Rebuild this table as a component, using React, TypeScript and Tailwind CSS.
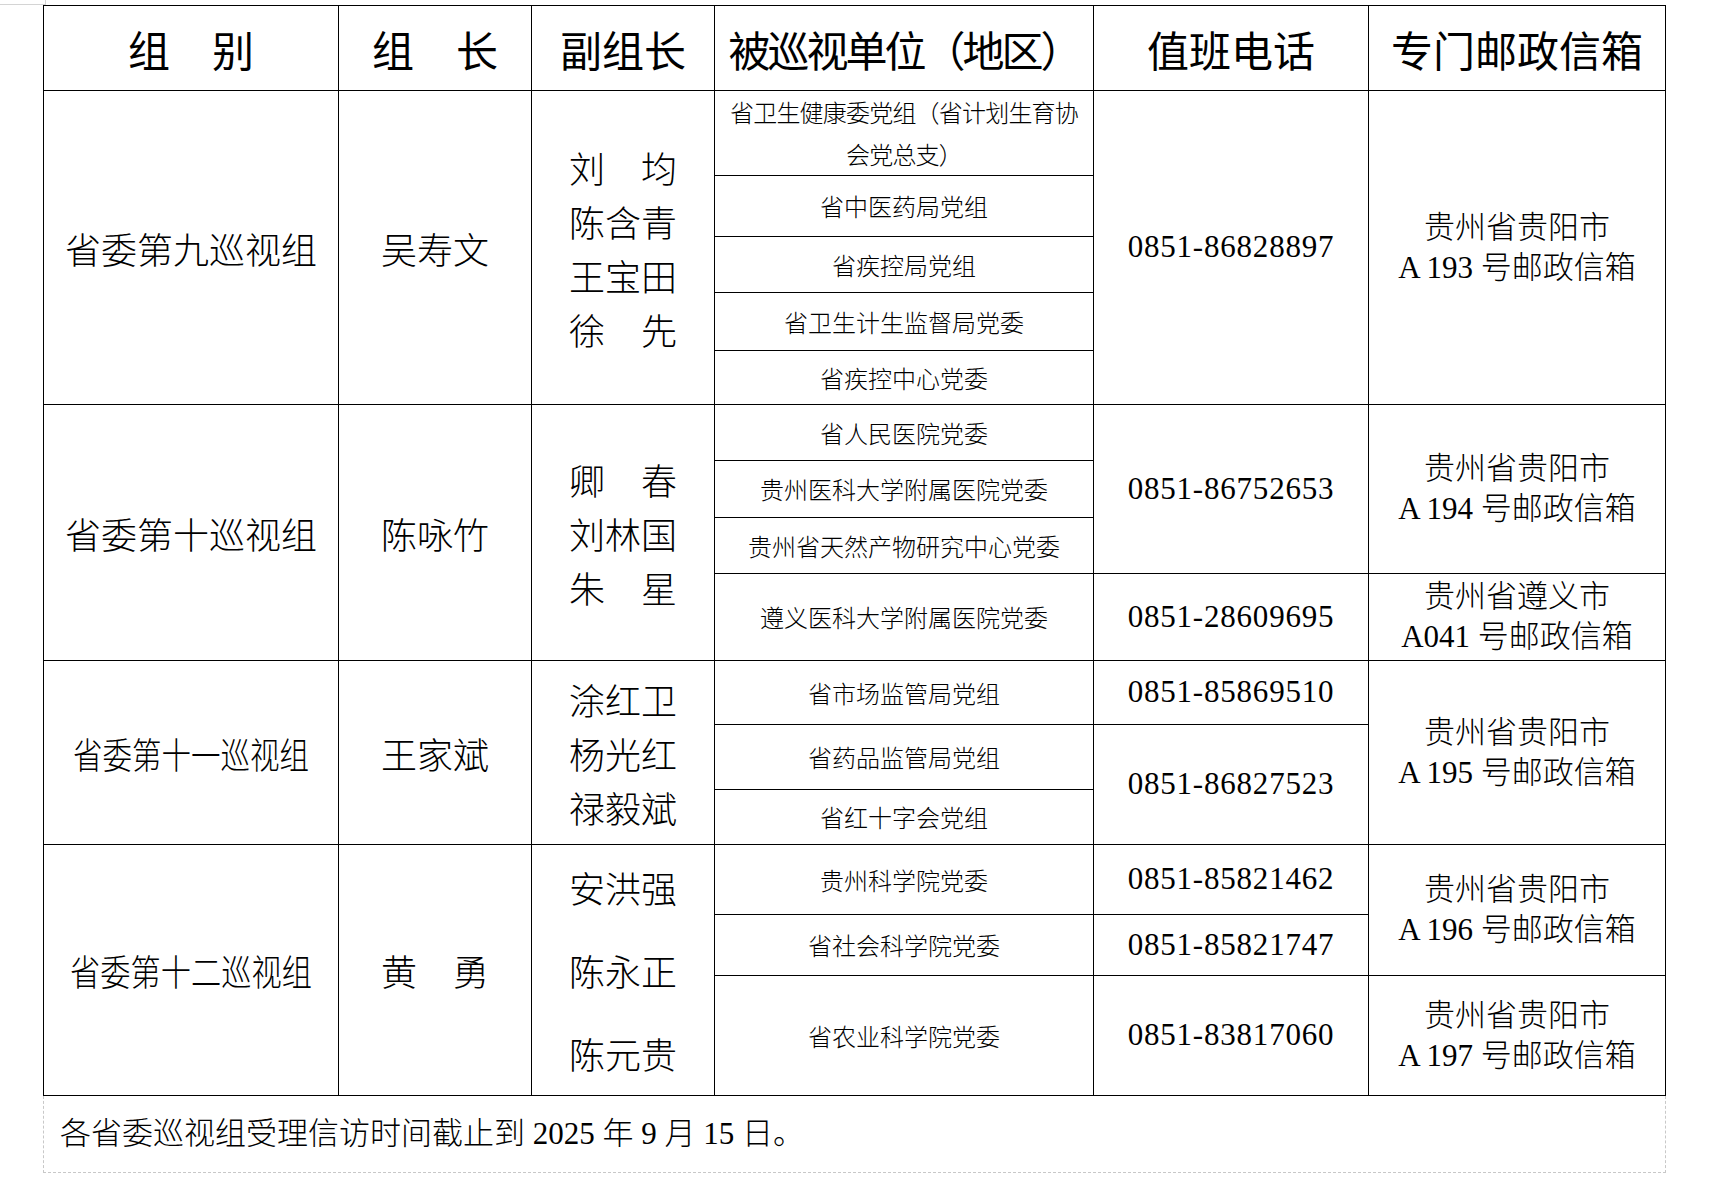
import React from "react"

const cjk = "font-['Noto_Sans_CJK_SC',sans-serif]"
const serif = "font-['Liberation_Serif','Noto_Sans_CJK_SC',serif]"

function Cell({ className = "", children }: { className?: string; children?: React.ReactNode }) {
  return (
    <div className={`flex items-center justify-center text-center border-r border-b border-black ${className}`}>
      {children}
    </div>
  )
}

function Head({ className = "", children }: { className?: string; children: React.ReactNode }) {
  return <Cell className={`row-start-1 text-[42px] font-normal ${cjk} ${className}`}>{children}</Cell>
}

function Name({ className = "", children }: { className?: string; children: React.ReactNode }) {
  return <Cell className={`text-[36px] font-light whitespace-pre ${cjk} ${className}`}>{children}</Cell>
}

function Names({ className = "", lines, leading = "leading-[54px]" }: { className?: string; lines: string[]; leading?: string }) {
  return (
    <Cell className={`text-[36px] font-light ${cjk} ${className}`}>
      <div className={`flex flex-col ${leading}`}>
        {lines.map((l) => (
          <span key={l} className="whitespace-pre">{l}</span>
        ))}
      </div>
    </Cell>
  )
}

function Unit({ className = "", children }: { className?: string; children: React.ReactNode }) {
  return <Cell className={`col-start-4 text-[24px] font-light whitespace-nowrap ${cjk} ${className}`}>{children}</Cell>
}

function Phone({ className = "", number }: { className?: string; number: string }) {
  return <Cell className={`col-start-5 text-[31px] tracking-[0.8px] ${serif} ${className}`}>{number}</Cell>
}

function Mailbox({ className = "", city, box }: { className?: string; city: string; box: string }) {
  return (
    <Cell className={`col-start-6 text-[31px] font-light leading-[40px] ${serif} ${className}`}>
      <div className="flex flex-col whitespace-pre">
        <span>{city}</span>
        <span>{box}</span>
      </div>
    </Cell>
  )
}

export default function App() {
  return (
    <div className="min-h-screen bg-white text-black">
      <div className="h-[5px] w-[46px] border-r border-b border-[#d4d4d4]" />
      <div className="ml-[43px] w-fit">
        <div className="grid grid-cols-[295px_193px_183px_379px_275px_297px] grid-rows-[85px_85px_61px_56px_58px_54px_56px_57px_56px_87px_64px_65px_55px_70px_61px_120px] border-l border-t border-black">
          {/* 表头 */}
          <Head className="col-start-1 whitespace-pre">组　别</Head>
          <Head className="col-start-2 whitespace-pre">组　长</Head>
          <Head className="col-start-3">副组长</Head>
          <Head className="col-start-4 tracking-[-3px] whitespace-nowrap">被巡视单位（地区）</Head>
          <Head className="col-start-5">值班电话</Head>
          <Head className="col-start-6">专门邮政信箱</Head>

          {/* 第九巡视组 */}
          <Name className="col-start-1 row-start-2 row-span-5">省委第九巡视组</Name>
          <Name className="col-start-2 row-start-2 row-span-5">吴寿文</Name>
          <Names className="col-start-3 row-start-2 row-span-5" lines={["刘　均", "陈含青", "王宝田", "徐　先"]} />
          <Unit className="row-start-2 leading-[42px] tracking-[-0.8px]">
            <div>
              省卫生健康委党组（省计划生育协
              <br />
              会党总支）
            </div>
          </Unit>
          <Unit className="row-start-3">省中医药局党组</Unit>
          <Unit className="row-start-4">省疾控局党组</Unit>
          <Unit className="row-start-5">省卫生计生监督局党委</Unit>
          <Unit className="row-start-6">省疾控中心党委</Unit>
          <Phone className="row-start-2 row-span-5" number="0851-86828897" />
          <Mailbox className="row-start-2 row-span-5" city="贵州省贵阳市" box="A 193 号邮政信箱" />

          {/* 第十巡视组 */}
          <Name className="col-start-1 row-start-7 row-span-4">省委第十巡视组</Name>
          <Name className="col-start-2 row-start-7 row-span-4">陈咏竹</Name>
          <Names className="col-start-3 row-start-7 row-span-4" lines={["卿　春", "刘林国", "朱　星"]} />
          <Unit className="row-start-7">省人民医院党委</Unit>
          <Unit className="row-start-8">贵州医科大学附属医院党委</Unit>
          <Unit className="row-start-9">贵州省天然产物研究中心党委</Unit>
          <Unit className="row-start-10">遵义医科大学附属医院党委</Unit>
          <Phone className="row-start-7 row-span-3" number="0851-86752653" />
          <Phone className="row-start-10" number="0851-28609695" />
          <Mailbox className="row-start-7 row-span-3" city="贵州省贵阳市" box="A 194 号邮政信箱" />
          <Mailbox className="row-start-10" city="贵州省遵义市" box="A041 号邮政信箱" />

          {/* 第十一巡视组 */}
          <Name className="col-start-1 row-start-11 row-span-3">
            <span className="inline-block scale-x-[0.82]">省委第十一巡视组</span>
          </Name>
          <Name className="col-start-2 row-start-11 row-span-3">王家斌</Name>
          <Names className="col-start-3 row-start-11 row-span-3" lines={["涂红卫", "杨光红", "禄毅斌"]} />
          <Unit className="row-start-11">省市场监管局党组</Unit>
          <Unit className="row-start-12">省药品监管局党组</Unit>
          <Unit className="row-start-13">省红十字会党组</Unit>
          <Phone className="row-start-11" number="0851-85869510" />
          <Phone className="row-start-12 row-span-2" number="0851-86827523" />
          <Mailbox className="row-start-11 row-span-3" city="贵州省贵阳市" box="A 195 号邮政信箱" />

          {/* 第十二巡视组 */}
          <Name className="col-start-1 row-start-14 row-span-3">
            <span className="inline-block scale-x-[0.84]">省委第十二巡视组</span>
          </Name>
          <Name className="col-start-2 row-start-14 row-span-3">黄　勇</Name>
          <Names className="col-start-3 row-start-14 row-span-3" lines={["安洪强", "陈永正", "陈元贵"]} leading="leading-[83px]" />
          <Unit className="row-start-14">贵州科学院党委</Unit>
          <Unit className="row-start-15">省社会科学院党委</Unit>
          <Unit className="row-start-16">省农业科学院党委</Unit>
          <Phone className="row-start-14" number="0851-85821462" />
          <Phone className="row-start-15" number="0851-85821747" />
          <Phone className="row-start-16" number="0851-83817060" />
          <Mailbox className="row-start-14 row-span-2" city="贵州省贵阳市" box="A 196 号邮政信箱" />
          <Mailbox className="row-start-16" city="贵州省贵阳市" box="A 197 号邮政信箱" />
        </div>

        <div className={`flex h-[77px] items-center border-x border-b border-dashed border-[#c8c8c8] pl-[16px] text-[31px] font-light ${serif}`}>
          各省委巡视组受理信访时间截止到 2025 年 9 月 15 日。
        </div>
      </div>
    </div>
  )
}
